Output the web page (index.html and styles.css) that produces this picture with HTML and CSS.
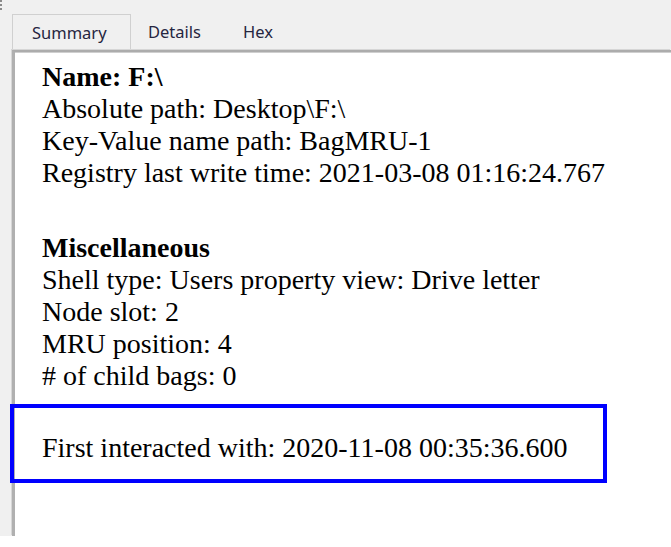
FILE: index.html
```html
<!DOCTYPE html>
<html>
<head>
<meta charset="utf-8">
<link rel="stylesheet" href="styles.css">
</head>
<body>
<div class="window">
  <div class="grip"></div>
  <div class="tabs">
    <div class="tab tab-summary active">Summary</div>
    <div class="tab tab-details">Details</div>
    <div class="tab tab-hex">Hex</div>
  </div>
  <div class="panel">
    <div class="line bold">Name: F:\</div>
    <div class="line">Absolute path: Desktop\F:\</div>
    <div class="line">Key-Value name path: BagMRU-1</div>
    <div class="line">Registry last write time: 2021-03-08 01:16:24.767</div>
    <div class="gap"></div>
    <div class="line bold">Miscellaneous</div>
    <div class="line">Shell type: Users property view: Drive letter</div>
    <div class="line">Node slot: 2</div>
    <div class="line">MRU position: 4</div>
    <div class="line"># of child bags: 0</div>
    <div class="highlight">
      <div class="line">First interacted with: 2020-11-08 00:35:36.600</div>
    </div>
  </div>
</div>
</body>
</html>
```
FILE: styles.css
```css
html, body {
  margin: 0;
  padding: 0;
  background: #ffffff;
}
.window {
  height: 536px;
  background: #f0f0f0;
  display: flex;
  flex-direction: column;
}
.grip {
  width: 0;
  height: 10px;
  margin-bottom: -10px;
  border-left: 2px dotted #8a8a8a;
}
.tabs {
  display: flex;
  padding: 14px 0 0 12px;
  height: 36px;
  box-sizing: content-box;
}
.tab {
  font-family: "Noto Sans", "Open Sans", sans-serif;
  font-size: 16.5px;
  color: #262640;
  height: 36px;
  line-height: 36px;
  box-sizing: border-box;
  white-space: nowrap;
}
.tab-summary {
  width: 119px;
  padding-left: 19px;
  border: 1px solid #d0d0d0;
  border-bottom: none;
  background: #f0f0f0;
}
.tab-details {
  width: 95px;
  padding-left: 17px;
}
.tab-hex {
  padding-left: 17px;
}
.panel {
  flex: 1;
  margin-left: 12px;
  background: #ffffff;
  border-left: 3px solid #b0b0b0;
  border-top: 2px solid #acacac;
  box-shadow: -1px -1px 0 #d6d6d6, inset 0 1px 0 #cfcfcf;
  padding: 9px 0 0 27px;
  font-family: "Liberation Serif", "Times New Roman", serif;
  font-size: 28px;
  color: #000000;
}
.line {
  line-height: 32px;
  height: 32px;
  white-space: nowrap;
}
.bold {
  font-weight: bold;
}
.gap {
  height: 43px;
}
.highlight {
  margin-left: -32px;
  margin-top: 12px;
  border: 4px solid #0000ff;
  padding: 24px 0 15px 28px;
  box-sizing: content-box;
  width: 561px;
}
```
